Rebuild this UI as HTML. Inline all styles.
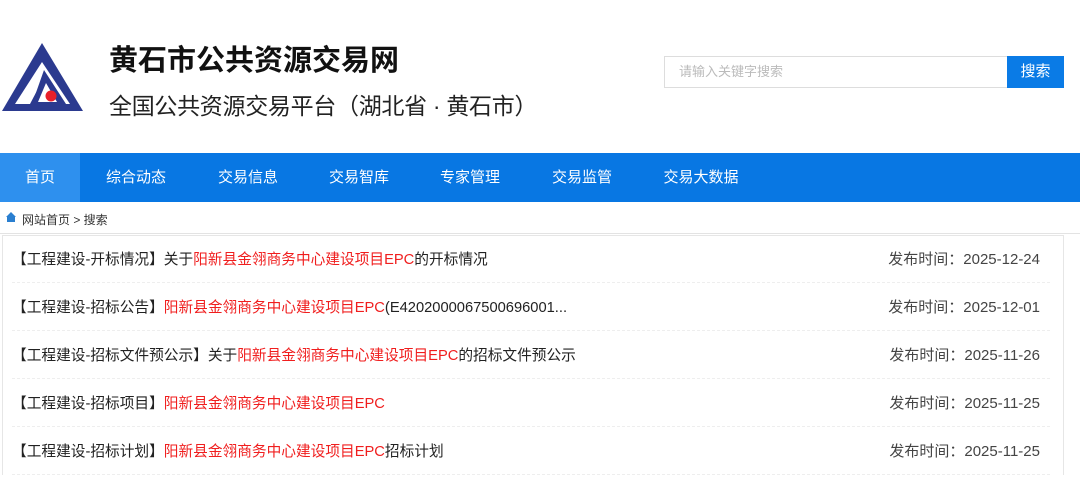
<!DOCTYPE html>
<html><head><meta charset="utf-8"><style>
*{margin:0;padding:0;box-sizing:border-box}
body{width:1080px;height:463px;overflow:hidden;background:#fff;font-family:"Liberation Sans","Noto Sans CJK SC",sans-serif;color:#333;position:relative}
.t1{position:absolute;left:109px;top:42px;font-size:29px;font-weight:bold;color:#111;line-height:38px;white-space:nowrap}
.t2{position:absolute;left:109px;top:90px;font-size:23px;color:#222;line-height:32px;white-space:nowrap;letter-spacing:-0.3px}
.inp{position:absolute;left:664px;top:56px;width:344px;height:32px;border:1px solid #ddd;font-size:13px;color:#bbb;line-height:30px;padding-left:14px}
.btn{position:absolute;left:1007px;top:56px;width:57px;height:32px;background:#0a7be6;color:#fff;font-size:15px;line-height:32px;text-align:center}
.nav{position:absolute;left:0;top:153px;width:1080px;height:49px;background:#0877e3}
.nav div{position:absolute;top:0;height:49px;line-height:49px;color:#fff;font-size:15px;text-align:center}
.bc{position:absolute;left:22px;top:211px;font-size:12px;color:#333}
.line{position:absolute;left:0;top:233px;width:1080px;height:1px;background:#e3e3e3}
.box{position:absolute;left:2px;top:235px;width:1062px;height:240px;border:1px solid #e6e6e6;border-bottom:none}
.row{position:absolute;left:12px;width:1038px;height:48px;border-bottom:1px dashed #eee;font-size:14.7px;line-height:50px;white-space:nowrap;color:#222}
.row span{color:#f01e1e}
.row b{font-weight:normal;position:absolute;right:10px;top:0;color:#444;font-size:15px}
</style></head><body>
<svg style="position:absolute;left:0;top:40px" width="90" height="75" viewBox="0 0 90 75">
<polygon points="42,3 83,71 2,71" fill="#2b3a8f"/>
<polygon points="42,22 70,64 15,64" fill="#fff"/>
<polygon points="44,30 66,64 30,71 32,64" fill="#2b3a8f"/>
<polygon points="30,64 40,45 38,71 28,71" fill="#2b3a8f"/>
<polygon points="46,43 57,62 38,62" fill="#fff"/>
<circle cx="51" cy="56" r="5.5" fill="#e8202a"/>
</svg>
<div class="t1">黄石市公共资源交易网</div>
<div class="t2">全国公共资源交易平台（湖北省 · 黄石市）</div>
<div class="inp">请输入关键字搜索</div>
<div class="btn">搜索</div>
<div class="nav">
<div style="left:0;width:80px;background:#2e90ee">首页</div>
<div style="left:80px;width:112px">综合动态</div>
<div style="left:192px;width:112px">交易信息</div>
<div style="left:303px;width:112px">交易智库</div>
<div style="left:414px;width:112px">专家管理</div>
<div style="left:526px;width:112px">交易监管</div>
<div style="left:638px;width:126px">交易大数据</div>
</div>
<svg style="position:absolute;left:6px;top:212px" width="10" height="10" viewBox="0 0 10 10"><polygon points="5,0 10,5 9,5 9,10 1,10 1,5 0,5" fill="#2a7fd0"/></svg>
<div class="bc">网站首页 &gt; 搜索</div>
<div class="line"></div>
<div class="box"></div>
<div class="row" style="top:235px">【工程建设-开标情况】关于<span>阳新县金翎商务中心建设项目EPC</span>的开标情况<b>发布时间：2025-12-24</b></div>
<div class="row" style="top:283px">【工程建设-招标公告】<span>阳新县金翎商务中心建设项目EPC</span>(E4202000067500696001...<b>发布时间：2025-12-01</b></div>
<div class="row" style="top:331px">【工程建设-招标文件预公示】关于<span>阳新县金翎商务中心建设项目EPC</span>的招标文件预公示<b>发布时间：2025-11-26</b></div>
<div class="row" style="top:379px">【工程建设-招标项目】<span>阳新县金翎商务中心建设项目EPC</span><b>发布时间：2025-11-25</b></div>
<div class="row" style="top:427px">【工程建设-招标计划】<span>阳新县金翎商务中心建设项目EPC</span>招标计划<b>发布时间：2025-11-25</b></div>
</body></html>
